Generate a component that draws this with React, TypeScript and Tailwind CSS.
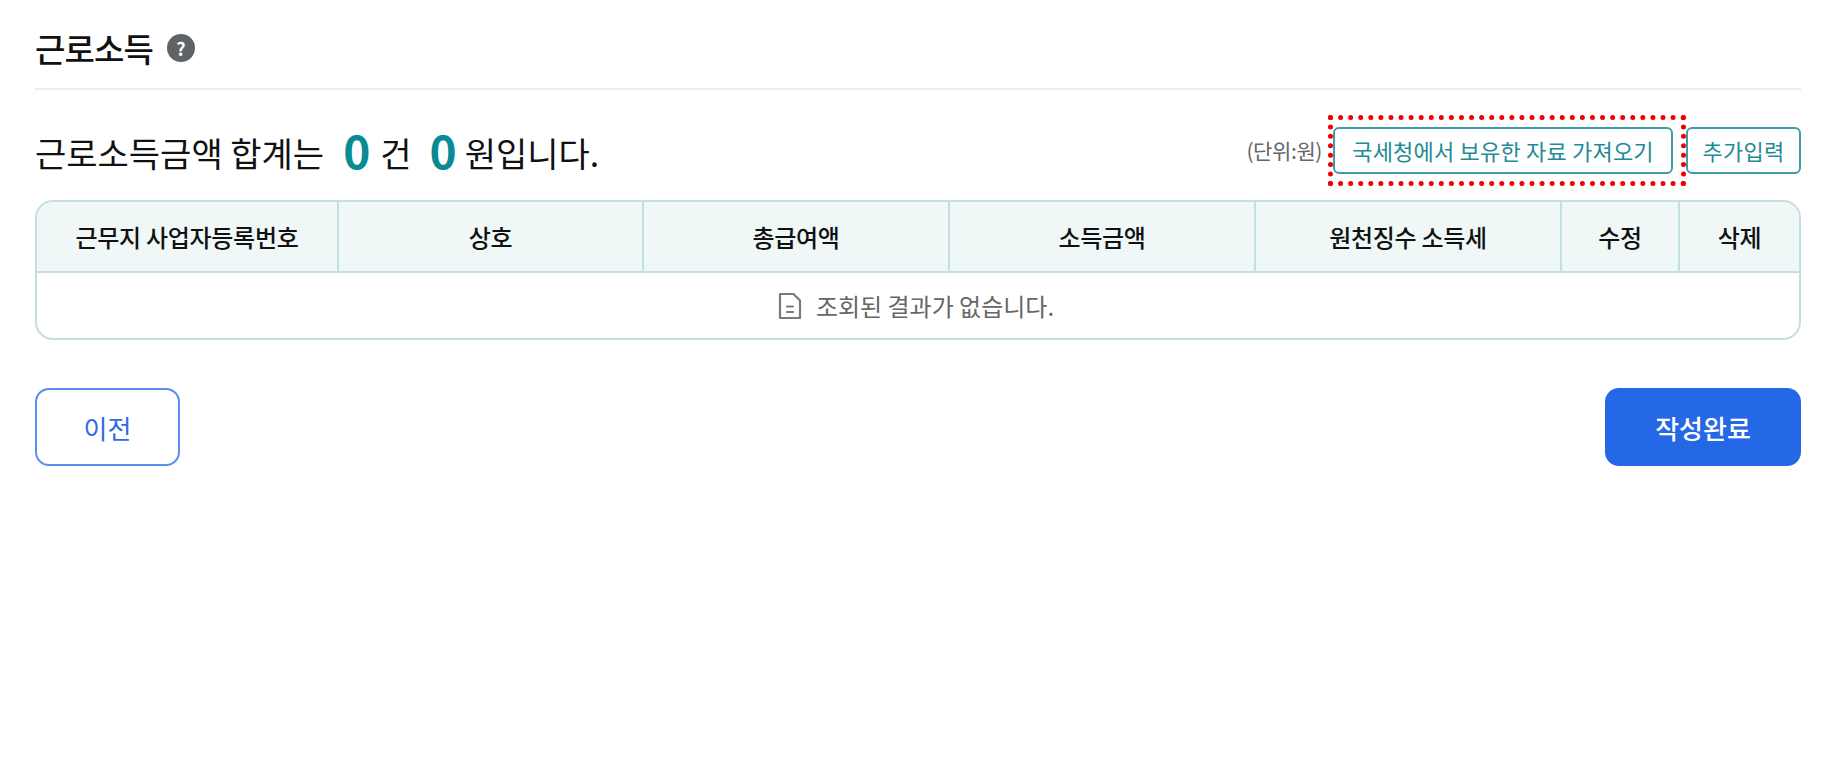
const columns = [
    "근무지 사업자등록번호",
    "상호",
    "총급여액",
    "소득금액",
    "원천징수 소득세",
    "수정",
    "삭제"
];

function EmptyIcon() {
    return (
        <svg width="24" height="28" viewBox="0 0 24 28" fill="none" stroke="#7a7a7a" strokeWidth="2.2" strokeLinejoin="round">
            <path d="M2 2h13.5L22 8.5V26H2V2z" />
            <path d="M9 14.5h6M9 20h6" strokeLinecap="round" />
        </svg>
    );
}

export default function App() {
    return (
        <div className="min-h-[784px] bg-white pt-[26px] pr-[24px] pl-[35px] font-['Noto_Sans_CJK_KR','Noto_Sans',sans-serif] text-[#111]">
            <div className="flex h-[64px] items-start gap-[14px] border-b-2 border-[#ececec]">
                <h2 className="text-[33px] leading-[44px] font-medium tracking-[-0.9px]">근로소득</h2>
                <span className="mt-[8px] flex h-[28px] w-[28px] items-center justify-center rounded-full bg-[#5f6368] text-[18px] font-bold text-white">
                    ?
                </span>
            </div>

            <div className="mt-[25px] flex h-[85px] items-start justify-between">
                <p className="flex h-[75px] items-center text-[34px] leading-none">
                    <span>근로소득금액 합계는</span>
                    <span className="-mt-[8px] ml-[19px] text-[46px] font-bold text-[#0a8a94]">0</span>
                    <span className="ml-[10px]">건</span>
                    <span className="-mt-[8px] ml-[18px] text-[46px] font-bold text-[#0a8a94]">0</span>
                    <span className="ml-[8px]">원입니다.</span>
                </p>
                <div className="flex items-center pt-[12px]">
                    <span className="mr-[11px] text-[21px] tracking-[-0.4px] text-[#666]">(단위:원)</span>
                    <div className="relative mr-[13px]">
                        <button className="flex h-[47px] w-[340px] items-center justify-center rounded-[6px] border-2 border-[#3d9ea8] text-[22px] tracking-[0.2px] text-[#1e8a94]">
                            국세청에서 보유한 자료 가져오기
                        </button>
                        <div className="absolute -top-[12px] -right-[13px] -bottom-[12px] -left-[5px] border-[5px] border-dotted border-[#f00000]" />
                    </div>
                    <button className="flex h-[47px] w-[115px] items-center justify-center rounded-[6px] border-2 border-[#3d9ea8] text-[22px] tracking-[0.2px] text-[#1e8a94]">
                        추가입력
                    </button>
                </div>
            </div>

            <div className="overflow-hidden rounded-[18px] border-2 border-[#c4dfe2]">
                <div className="grid h-[71px] grid-cols-[302px_305px_306px_306px_306px_118px_1fr] border-b-2 border-[#c4dfe2] bg-[#eff8f7]">
                    {columns.map((label, i) => (
                        <div
                            key={label}
                            className={
                                i < columns.length - 1
                                    ? "flex items-center justify-center border-r-2 border-[#c4dfe2] text-[24px] font-medium tracking-[-0.3px]"
                                    : "flex items-center justify-center text-[24px] font-medium tracking-[-0.3px]"
                            }
                        >
                            {label}
                        </div>
                    ))}
                </div>
                <div className="flex h-[65px] items-center justify-center gap-[14px] pr-[4px] text-[24px] text-[#666]">
                    <EmptyIcon />
                    <span>조회된 결과가 없습니다.</span>
                </div>
            </div>

            <div className="mt-[48px] flex items-center justify-between">
                <button className="h-[78px] w-[145px] rounded-[14px] border-2 border-[#5b8def] text-[26px] text-[#2f6be6]">
                    이전
                </button>
                <button className="h-[78px] w-[196px] rounded-[14px] bg-[#2468e5] text-[26px] font-medium text-white">
                    작성완료
                </button>
            </div>
        </div>
    );
}
